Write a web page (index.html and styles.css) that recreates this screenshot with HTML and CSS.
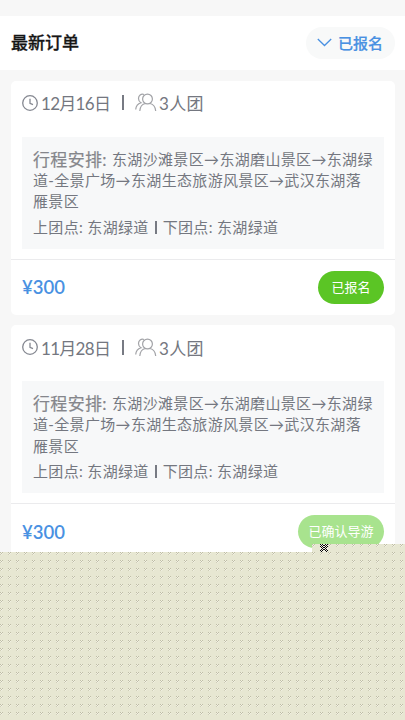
FILE: index.html
```html
<!DOCTYPE html>
<html lang="zh-CN">
<head>
<meta charset="utf-8">
<title>最新订单</title>
<link rel="stylesheet" href="styles.css">
</head>
<body>
<svg class="sprite" aria-hidden="true">
  <symbol id="clock" viewBox="0 0 16 16"><circle cx="8" cy="8" r="7.3"/><path d="M8 3.8v4.500l3 1.400"/></symbol>
  <symbol id="people" viewBox="0 0 22 19"><circle cx="12.500" cy="6" r="4.900"/><path d="M4.800 18c.3-4 2.500-7 5.700-7.500M15 10.500c3.500.8 5.400 3.500 5.700 7.500M9 1.500C6 .5 3.500 2.500 3.500 5.500c0 2 1 3.500 2.500 4.300C3 10.700 1 13 .7 16.500"/></symbol>
</svg>
<header class="header">
  <h1 class="title">最新订单</h1>
  <div class="filter"><svg class="chevron" viewBox="0 0 15 9"><path d="M.8 1l6.700 6.500L14.200 1"/></svg><span>已报名</span></div>
</header>
<main class="orders">
  <article class="card">
    <div class="meta"><svg class="clock"><use href="#clock"/></svg><span class="date">12月16日</span><i class="bar"></i><svg class="people"><use href="#people"/></svg><span class="group">3人团</span></div>
    <div class="trip">
      <p class="line"><span class="label">行程安排:</span><span class="route">东湖沙滩景区→东湖磨山景区→东湖绿</span></p>
      <p class="line">道-全景广场→东湖生态旅游风景区→武汉东湖落</p>
      <p class="line">雁景区</p>
      <p class="line stops"><span>上团点: 东湖绿道</span><i class="bar small"></i><span>下团点: 东湖绿道</span></p>
    </div>
    <footer class="foot"><span class="price">¥300</span><span class="status">已报名</span></footer>
  </article>
  <article class="card">
    <div class="meta"><svg class="clock"><use href="#clock"/></svg><span class="date">11月28日</span><i class="bar"></i><svg class="people"><use href="#people"/></svg><span class="group">3人团</span></div>
    <div class="trip">
      <p class="line"><span class="label">行程安排:</span><span class="route">东湖沙滩景区→东湖磨山景区→东湖绿</span></p>
      <p class="line">道-全景广场→东湖生态旅游风景区→武汉东湖落</p>
      <p class="line">雁景区</p>
      <p class="line stops"><span>上团点: 东湖绿道</span><i class="bar small"></i><span>下团点: 东湖绿道</span></p>
    </div>
    <footer class="foot"><span class="price">¥300</span><span class="status confirmed">已确认导游</span></footer>
  </article>
</main>
<div class="texture">
  <svg class="dots" width="405" height="176" shape-rendering="crispEdges">
    <defs><pattern id="weave" width="8" height="8" patternUnits="userSpaceOnUse">
      <path fill="#bfbea5" d="M0 0h1v1H0zM2 0h1v1H2zM1 1h1v1H1z"/>
      <path fill="#cecdb6" d="M0 2h1v1H0z"/>
      <path fill="#f1f0e3" d="M1 0h1v1H1zM0 1h1v1H0zM2 1h1v1H2zM1 2h1v1H1z"/>
    </pattern></defs>
    <rect width="405" height="176" fill="url(#weave)"/>
  </svg>
  <svg class="speckle" viewBox="0 0 8 8" shape-rendering="crispEdges"><rect width="8" height="8" fill="#f1f0e3"/><path d="M0 0h1v1H0zM2 0h1v1H2zM5 0h1v1H5zM7 0h1v1H7zM1 1h1v1H1zM3 1h2v1H3zM6 1h1v1H6zM0 2h1v1H0zM2 2h1v1H2zM5 2h1v1H5zM7 2h1v1H7zM1 3h1v1H1zM3 3h2v1H3zM6 3h1v1H6zM2 4h1v1H2zM5 4h1v1H5zM1 5h1v1H1zM3 5h2v1H3zM6 5h1v1H6zM0 6h1v1H0zM2 6h1v1H2zM5 6h1v1H5zM7 6h1v1H7zM1 7h1v1H1zM6 7h1v1H6z"/></svg>
</div>
</body>
</html>
```
FILE: styles.css
```css
* { box-sizing: border-box; }
body {
  margin: 0;
  height: 720px;
  padding-top: 16px;
  overflow: hidden;
  position: relative;
  background: #f7f7f7;
  color: #747780;
  font-family: Lato, "Noto Sans CJK SC", sans-serif;
}
.sprite { position: absolute; width: 0; height: 0; }
svg { fill: none; stroke: #858891; stroke-width: 1.3; flex: none; }
.header {
  height: 54px;
  padding: 0 16px 0 11px;
  display: flex;
  align-items: center;
  justify-content: space-between;
  background: #fff;
}
.title { margin: 0; font-size: 17px; font-weight: 500; -webkit-text-stroke: .3px; color: #151515; line-height: 24px; }
.filter {
  width: 89px;
  height: 32px;
  margin-right: -6px;
  padding: 0 0 2px 11px;
  border-radius: 16px;
  background: #f8f9f9;
  color: #4991e2;
  font-size: 15px;
  font-weight: 500;
  display: flex;
  align-items: center;
  gap: 6px;
}
.filter span { -webkit-text-stroke: .2px; }
.chevron { width: 15px; height: 9px; stroke: #4991e2; }
.orders { padding: 11px 10.5px 0 11px; display: flex; flex-direction: column; gap: 10px; }
.card { height: 234.4px; background: #fff; border-radius: 5px; }
.meta { height: 55.6px; padding: 0 11px 12px; display: flex; align-items: center; white-space: nowrap; font-size: 17px; }
.clock { width: 16px; height: 16px; margin-right: 3px; }
.date { width: 70px; letter-spacing: -.7px; }
.bar { width: 2px; height: 15px; margin: 0 11px; background: #777a83; }
.people { width: 22px; height: 19px; margin-right: 2px; stroke: #a2a3a7; stroke-width: 1.2; }
.group { letter-spacing: .3px; }
.trip { height: 112px; margin: 0 10.5px 0 11px; padding: 12px 0 0 11px; background: #f7f8f9; }
.line { margin: 0; height: 21.4px; line-height: 21.4px; font-size: 15px; letter-spacing: .34px; white-space: nowrap; display: flex; align-items: center; }
.label { width: 79px; font-size: 17px; color: #85868b; -webkit-text-stroke: .2px; }
.stops { margin-top: 4px; }
.small { height: 13px; margin: 0 6px; }
.foot { height: 56px; margin-top: 10.4px; padding: 0 10.5px 0 11px; border-top: 1px solid #ebebed; display: flex; align-items: center; justify-content: space-between; }
.price { font-size: 18.5px; font-weight: 600; color: #4991e2; }
.status { height: 33px; min-width: 66px; padding: 0 10.5px; border-radius: 17px; background: #5bc525; color: #fff; font-size: 13px; line-height: 32px; text-align: center; }
.confirmed { background: #a8e38e; }
.texture {
  position: absolute;
  inset: 544px 0 0;
  clip-path: polygon(0 8px, 312px 8px, 312px 0, 405px 0, 405px 176px, 0 176px);
  background: #e7e7d2;
}
.dots { display: block; stroke: none; }
.speckle { position: absolute; left: 320px; top: 0; width: 8px; height: 8px; fill: #050505; stroke: none; }
```
